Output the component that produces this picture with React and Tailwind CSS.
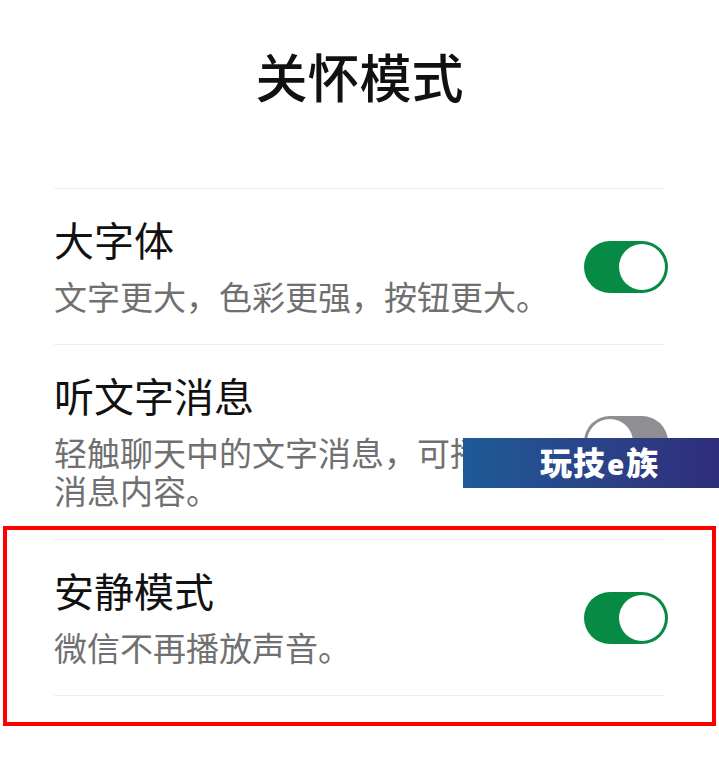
import React, { useState } from 'react';

const font = { fontFamily: '"Noto Sans", "Noto Sans CJK SC", sans-serif' };

function Toggle({ on, onClick }) {
    return (
        <button
            type="button"
            onClick={onClick}
            className={`-mr-[3px] flex h-[52px] w-[84px] shrink-0 items-center rounded-full p-[3px] ${
                on ? 'justify-end bg-[#078a43]' : 'justify-start bg-[#8e8e93]'
            }`}
        >
            <span className="block h-[46px] w-[46px] rounded-full bg-white" />
        </button>
    );
}

function SettingRow({ title, desc, on, onToggle }) {
    return (
        <div className="flex items-center justify-between pt-[27px] pb-[27px]">
            <div className="flex flex-col gap-[13px]">
                <div className="text-[40px] leading-[50px] text-[#111]">{title}</div>
                <div className="text-[33px] leading-[38px] text-[#707070]">{desc}</div>
            </div>
            <Toggle on={on} onClick={onToggle} />
        </div>
    );
}

function Divider() {
    return <div className="h-px bg-[#eeeeee]" />;
}

export default function App() {
    const [settings, setSettings] = useState({ big: true, listen: false, quiet: true });

    const toggle = (key) => setSettings((prev) => ({ ...prev, [key]: !prev[key] }));

    return (
        <div className="relative h-[774px] w-full overflow-hidden bg-white" style={font}>
            <h1 className="pt-[48px] text-center text-[52px] font-medium leading-[60px] text-[#111]">关怀模式</h1>

            <div className="mx-[54px] mt-[80px]">
                <Divider />
                <SettingRow
                    title="大字体"
                    desc="文字更大，色彩更强，按钮更大。"
                    on={settings.big}
                    onToggle={() => toggle('big')}
                />
                <Divider />
                <div className="flex items-center justify-between pt-[27px] pb-[15px]">
                    <div className="flex flex-col gap-[13px]">
                        <div className="text-[40px] leading-[50px] text-[#111]">听文字消息</div>
                        <div className="text-[33px] leading-[38px] text-[#707070]">
                            <div>轻触聊天中的文字消息，可播放</div>
                            <div>消息内容。</div>
                        </div>
                    </div>
                    <Toggle on={settings.listen} onClick={() => toggle('listen')} />
                </div>
            </div>

            {/* annotation box */}
            <div className="mx-[3px] border-4 border-[#ff0000] px-[47px] pt-[9px] pb-[26px]">
                <Divider />
                <SettingRow
                    title="安静模式"
                    desc="微信不再播放声音。"
                    on={settings.quiet}
                    onToggle={() => toggle('quiet')}
                />
                <Divider />
            </div>

            {/* watermark */}
            <div className="absolute left-[463px] top-[438px] flex h-[50px] w-[256px] items-center bg-gradient-to-r from-[#1d5a97] to-[#2e2d7c] pl-[77px]">
                <span className="text-[32px] font-black leading-none tracking-[1px] text-white">
                    玩技<span className="px-[1px] text-[28px]">e</span>族
                </span>
            </div>
        </div>
    );
}
